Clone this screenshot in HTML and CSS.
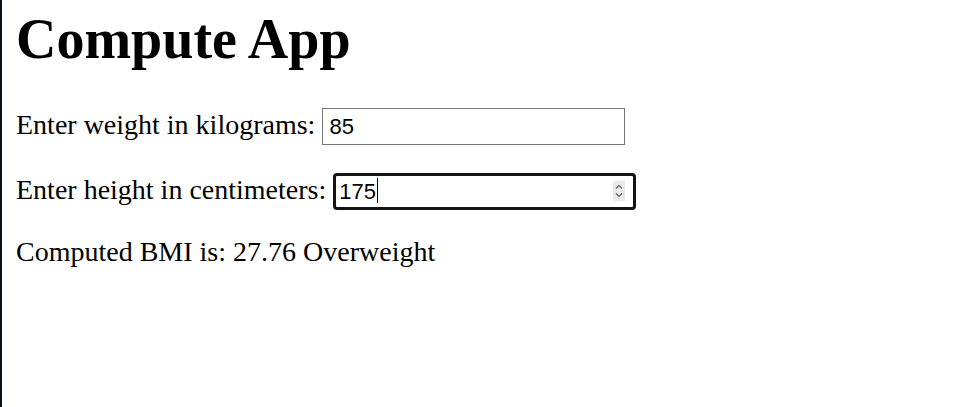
FILE: index.html
```html
<!DOCTYPE html>
<html lang="en">
<head>
<meta charset="utf-8">
<title>Compute App</title>
<link rel="stylesheet" href="styles.css">
</head>
<body>
<div class="page">
  <h1 class="title">Compute App</h1>
  <div class="row row-weight">
    <label class="label" for="weight">Enter weight in kilograms:</label>
    <input class="field" id="weight" type="text" value="85">
  </div>
  <div class="row row-height">
    <label class="label" for="height">Enter height in centimeters:</label>
    <span class="field-wrap">
      <input class="field field-focus" id="height" type="text" value="175">
      <span class="caret"></span>
      <span class="spin">
        <svg width="12" height="20" viewBox="0 0 12 20">
          <path d="M3 7.5 L6 4.5 L9 7.5" fill="none" stroke="#666" stroke-width="1.2"/>
          <path d="M3 12.5 L6 15.5 L9 12.5" fill="none" stroke="#666" stroke-width="1.2"/>
        </svg>
      </span>
    </span>
  </div>
  <p class="result">Computed BMI is: 27.76 Overweight</p>
</div>
</body>
</html>
```

FILE: styles.css
```css
html, body {
  margin: 0;
  height: 100%;
}

body {
  font-family: "Liberation Serif", "Times New Roman", serif;
  font-size: 28px;
  color: #000;
  background: #fff;
}

.page {
  min-height: 100vh;
  box-sizing: border-box;
  border-left: 2px solid #0b0f19;
  padding: 7px 14px 0 14px;
}

.title {
  font-size: 56px;
  font-weight: bold;
  line-height: 64px;
  margin: 0 0 37px 0;
}

.row {
  display: flex;
  align-items: baseline;
  gap: 7px;
}

.row-weight {
  margin-bottom: 28px;
}

.row-height {
  margin-bottom: 26px;
}

.label {
  white-space: nowrap;
}

.field {
  width: 303px;
  height: 37px;
  box-sizing: border-box;
  margin: 0;
  padding: 0 6px;
  font-family: "Liberation Sans", Arial, sans-serif;
  font-size: 22px;
  color: #000;
  background: #fff;
  border: 1px solid #767676;
  border-radius: 0;
  outline: none;
}

.field-wrap {
  position: relative;
  display: inline-flex;
}

.field-focus {
  border: 3px solid #141414;
  border-radius: 4px;
  padding-left: 3px;
}

.caret {
  position: absolute;
  left: 44px;
  top: 5px;
  width: 1px;
  height: 25px;
  background: #000;
}

.spin {
  position: absolute;
  right: 11px;
  top: 8px;
  width: 12px;
  height: 20px;
  background: #e9e9e9;
  display: flex;
}

.result {
  margin: 0;
}
```
